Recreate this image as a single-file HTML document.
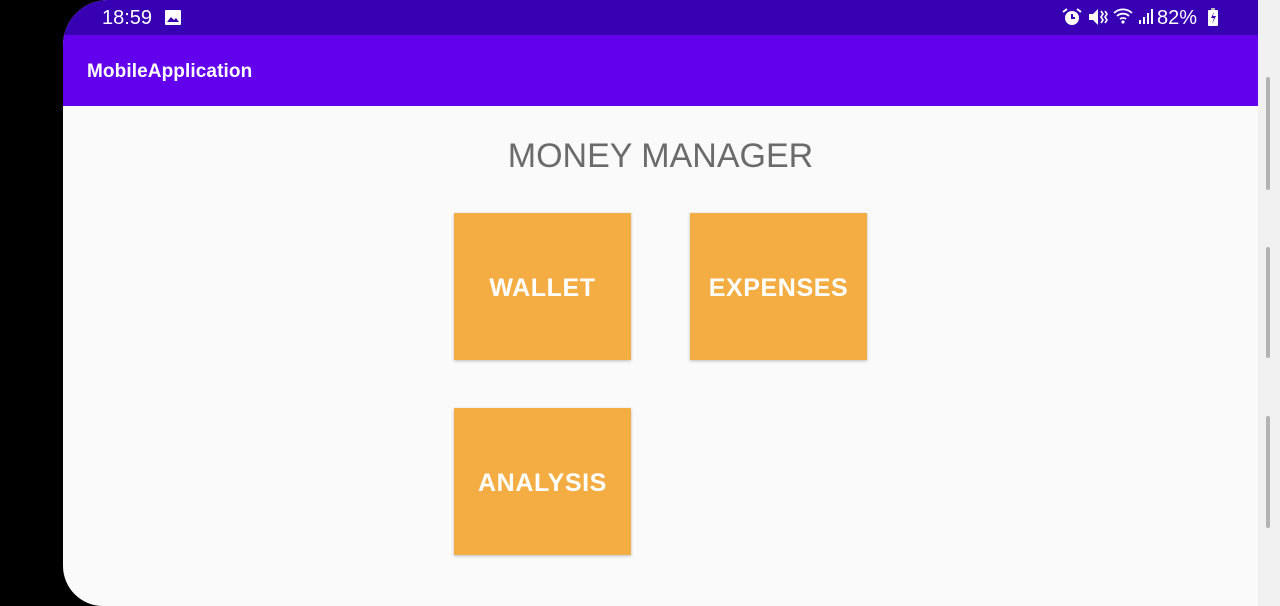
<!DOCTYPE html>
<html><head><meta charset="utf-8"><style>
*{margin:0;padding:0;box-sizing:border-box}
body{width:1280px;height:606px;background:#000;position:relative;overflow:hidden;font-family:"Liberation Sans",Roboto,sans-serif}
.phone{position:absolute;left:63px;top:0;width:1195px;height:606px;background:#fafafa;border-radius:45px 0 0 40px;overflow:hidden}
.status{position:absolute;left:0;top:0;width:100%;height:35px;background:#3700b3;color:#fff}
.bar{position:absolute;left:0;top:35px;width:100%;height:71px;background:#6200ee;color:#fff;font-size:19px;font-weight:bold;line-height:73px;padding-left:24px;letter-spacing:0.1px}
.right{position:absolute;left:1258px;top:0;width:22px;height:606px;background:#f1f1f1}
.sb{position:absolute;left:1266px;width:4px;background:#b3b3b3;border-radius:2px}
.title{position:absolute;left:0;width:1195px;top:137px;text-align:center;font-size:34px;color:#6b6b6b}
.btn{position:absolute;width:177px;height:147px;background:#f4ad43;color:#fff;font-size:25px;font-weight:bold;letter-spacing:0.6px;padding-top:4px;display:flex;align-items:center;justify-content:center;box-shadow:0 1px 3px rgba(0,0,0,.25)}
</style></head><body>
<div class="right"></div>
<div class="sb" style="top:77px;height:113px"></div>
<div class="sb" style="top:247px;height:111px"></div>
<div class="sb" style="top:416px;height:112px"></div>
<div class="phone">
<div class="status">
<span style="position:absolute;left:39px;top:7px;font-size:20px">18:59</span>
<svg style="position:absolute;left:102px;top:10px" width="16" height="15" viewBox="0 0 16 15"><rect x="0" y="0" width="16" height="15" rx="1" fill="#fff"/><path d="M2 12 L6 7 L9 10 L11 8 L14 12Z" fill="#3700b3"/></svg>
<svg style="position:absolute;left:999px;top:8px" width="20" height="18" viewBox="0 0 20 18"><circle cx="10" cy="10" r="7" fill="#fff"/><path d="M10 6v4h3" stroke="#3700b3" stroke-width="2" fill="none"/><path d="M1 4l4-3M19 4l-4-3" stroke="#fff" stroke-width="2"/></svg>
<svg style="position:absolute;left:1025px;top:8px" width="20" height="18" viewBox="0 0 20 18"><path d="M1 6h4l5-5v16l-5-5H1z" fill="#fff"/><path d="M13 3l2 3-2 3 2 3-2 3M17 3l2 3-2 3 2 3-2 3" stroke="#fff" stroke-width="1.6" fill="none"/></svg>
<svg style="position:absolute;left:1050px;top:7px" width="22" height="18" viewBox="0 0 22 18"><path d="M1 6a13 13 0 0 1 18 0M4 9a9 9 0 0 1 12 0M7 12a5 5 0 0 1 6 0" stroke="#fff" stroke-width="1.8" fill="none"/><circle cx="10" cy="15" r="1.6" fill="#fff"/></svg>
<svg style="position:absolute;left:1076px;top:9px" width="14" height="16" viewBox="0 0 14 16"><rect x="0" y="11" width="2" height="4" fill="#fff"/><rect x="4" y="8" width="2" height="7" fill="#fff"/><rect x="8" y="4" width="2" height="11" fill="#fff"/><rect x="12" y="0" width="2" height="15" fill="#fff"/></svg>
<span style="position:absolute;left:1094px;top:7px;font-size:20px">82%</span>
<svg style="position:absolute;left:1145px;top:8px" width="10" height="18" viewBox="0 0 10 18"><rect x="3" y="0" width="4" height="2" fill="#bbb"/><rect x="0" y="2" width="10" height="16" rx="1" fill="#fff"/><path d="M6 4L3 10h3l-2 6 4-8H5z" fill="#3700b3"/></svg>
</div>
<div class="bar">MobileApplication</div>
<div class="title">MONEY MANAGER</div>
<div class="btn" style="left:391px;top:213px">WALLET</div>
<div class="btn" style="left:627px;top:213px">EXPENSES</div>
<div class="btn" style="left:391px;top:408px">ANALYSIS</div>
</div>
</body></html>
